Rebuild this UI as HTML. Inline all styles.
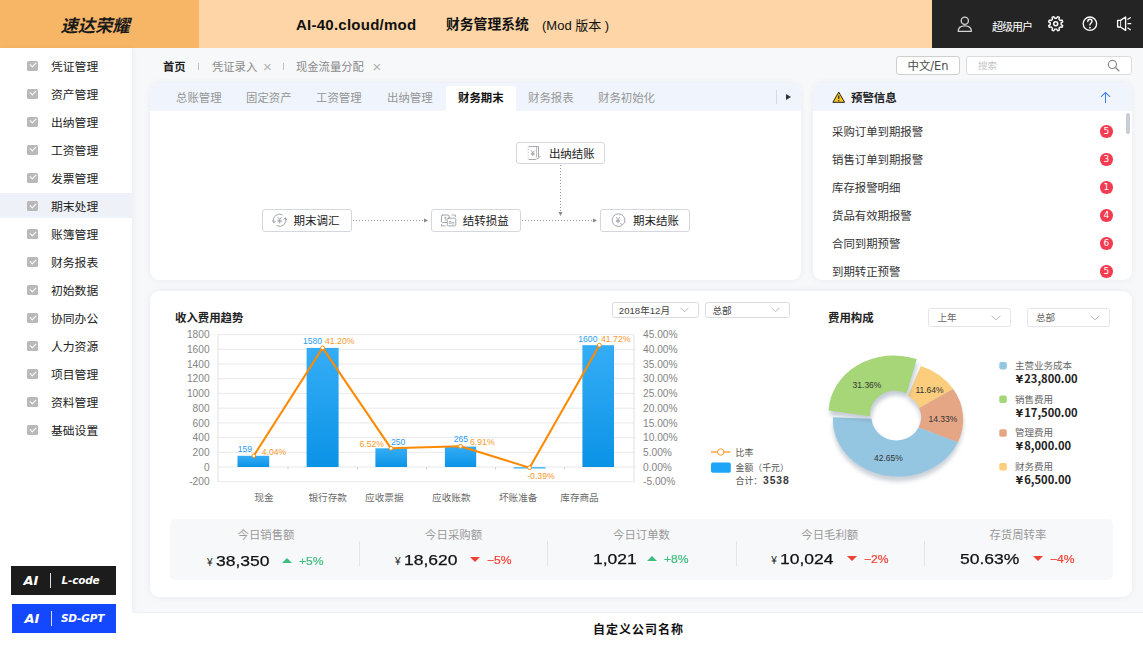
<!DOCTYPE html>
<html lang="zh-CN">
<head>
<meta charset="utf-8">
<title>财务管理系统</title>
<style>
*{box-sizing:border-box;margin:0;padding:0}
html,body{width:1143px;height:646px;overflow:hidden}
body{position:relative;background:#f7f8fa;font-family:"Liberation Sans","Noto Sans CJK SC",sans-serif;font-size:11.5px;color:#333}
.abs{position:absolute}
.t{position:absolute;white-space:nowrap;line-height:1}
/* header */
#hd{position:absolute;left:0;top:0;width:1143px;height:48px;background:#fdd5a6}
#hd .logo{position:absolute;left:0;top:0;width:199.400px;height:48px;background:#f7b566}
#hd .dark{position:absolute;left:932px;top:0;width:211px;height:48px;background:#242424}
/* sidebar */
#sb{position:absolute;left:0;top:48px;width:132px;height:598px;background:#fff;box-shadow:1px 0 5px rgba(80,90,120,.07)}
#sb .it{position:absolute;left:0;width:131px;height:28px}
#sb .it.on:before{content:"";position:absolute;left:0;top:1.500px;width:132px;height:25px;background:#eff1f8}
#sb .it span{position:absolute;left:51px;top:8px;font-size:11.8px;line-height:14px;color:#222;white-space:nowrap}
#sb .it i{position:absolute;left:27px;top:9.100px;width:11px;height:10px;background:#b9b9b9;border-radius:1.5px}
#sb .it i:after{content:"";position:absolute;left:2.5px;top:1.5px;width:5px;height:3px;border-left:1.3px solid #fff;border-bottom:1.3px solid #fff;transform:rotate(-45deg)}
.card{position:absolute;background:#fff;border-radius:9px;box-shadow:0 0 6px rgba(60,80,120,.08)}
.tab{top:10px;font-size:11.4px;color:#959595}
.fbox{position:absolute;width:89.600px;height:22.400px;border:1px solid #d5d7df;border-radius:3px;background:#fff}
.fbox span{position:absolute;left:30.200px;top:5px;font-size:11.5px;line-height:12px;color:#222;white-space:nowrap}
.bdg{position:absolute;left:287px;width:12.500px;height:12.500px;border-radius:50%;background:#f23c52;color:#fff;font-size:9px;font-weight:normal;line-height:12.500px;text-align:center;font-family:"DejaVu Sans","Liberation Sans",sans-serif}
.dd{position:absolute;border:1px solid #d9dce2;border-radius:2.5px;background:#fff}
.dd span{position:absolute;top:0;color:#444;white-space:nowrap}
.dd svg{position:absolute}
.sv{font-size:14.7px;color:#111;-webkit-text-stroke:0.25px #111;font-family:"Liberation Sans",sans-serif;transform:scaleX(1.19);transform-origin:0 50%}
.aib{position:absolute;width:104px;height:29px;color:#fff;font-style:italic;font-weight:bold;font-family:"DejaVu Sans","Liberation Sans",sans-serif}
.aib b{position:absolute;left:12.500px;top:7px;font-size:13px;line-height:15px}
.aib i{position:absolute;left:39px;top:6.500px;width:1px;height:15px;background:#ddd}
.aib span{position:absolute;top:8px;font-size:10.500px;line-height:13px;white-space:nowrap;letter-spacing:-0.2px}
</style>
</head>
<body>
<!-- HEADER -->
<div id="hd">
  <div class="logo"><div class="t" style="left:60.500px;top:17.500px;font-size:17.300px;font-weight:bold;font-style:italic;color:#1a1a1a;letter-spacing:0px">速达荣耀</div></div>
  <div class="t" style="left:296px;top:17px;font-size:15px;font-weight:bold;color:#111;letter-spacing:0.25px">AI-40.cloud/mod</div>
  <div class="t" style="left:446px;top:18px;font-size:13.8px;font-weight:bold;color:#111">财务管理系统</div>
  <div class="t" style="left:542px;top:19px;font-size:13px;color:#111">(Mod 版本 )</div>
  <div class="dark">
    <svg class="abs" style="left:0;top:0" width="211" height="48" viewBox="0 0 211 48" fill="none" stroke="#fff" stroke-width="1.3" stroke-linecap="round" stroke-linejoin="round">
      <g stroke="#d4d4d4"><circle cx="32.800" cy="20.800" r="3.600"/><path d="M26.200 31.300c0-3.500 2.700-5.500 6.600-5.500s6.600 2 6.600 5.500z"/></g>
      <path d="M124.60 18.27L125.57 16.64L127.37 17.39L126.90 19.23L128.17 20.50L130.01 20.03L130.76 21.83L129.13 22.80L129.13 24.60L130.76 25.57L130.01 27.37L128.17 26.90L126.90 28.17L127.37 30.01L125.57 30.76L124.60 29.13L122.80 29.13L121.83 30.76L120.03 30.01L120.50 28.17L119.23 26.90L117.39 27.37L116.64 25.57L118.27 24.60L118.27 22.80L116.64 21.83L117.39 20.03L119.23 20.50L120.50 19.23L120.03 17.39L121.83 16.64L122.80 18.27Z" stroke-width="1.35"/><circle cx="123.700" cy="23.700" r="2" stroke-width="1.500"/>
      <circle cx="157.900" cy="23.700" r="6.700" stroke-width="1.300"/><path d="M155.800 21.500c0-1.400 0.900-2.200 2.100-2.200s2.100 0.800 2.100 2c0 1.700-2.100 1.800-2.100 3.700" stroke-width="1.400"/><circle cx="157.900" cy="27.700" r="0.600" fill="#fff" stroke-width="0.600"/>
      <path d="M185.600 20.400h2.800l5.200-3.400v13.400l-5.200-3.400h-2.800z" stroke-width="1.300"/><path d="M188.600 20.600v5.800" stroke-width="0.900"/><path d="M195.800 19.300l2.600-1.600M196 23.700h2.800M195.800 28.100l2.600 1.600" stroke-width="1.200"/>
    </svg>
    <div class="t" style="left:60px;top:21.500px;font-size:11px;color:#fff;letter-spacing:-1px">超级用户</div>
  </div>
</div>
<!-- SIDEBAR -->
<div id="sb">
  <div class="it" style="top:3.70px"><i></i><span>凭证管理</span></div>
  <div class="it" style="top:31.75px"><i></i><span>资产管理</span></div>
  <div class="it" style="top:59.80px"><i></i><span>出纳管理</span></div>
  <div class="it" style="top:87.85px"><i></i><span>工资管理</span></div>
  <div class="it" style="top:115.90px"><i></i><span>发票管理</span></div>
  <div class="it on" style="top:143.95px"><i></i><span>期末处理</span></div>
  <div class="it" style="top:172.00px"><i></i><span>账簿管理</span></div>
  <div class="it" style="top:200.05px"><i></i><span>财务报表</span></div>
  <div class="it" style="top:228.10px"><i></i><span>初始数据</span></div>
  <div class="it" style="top:256.15px"><i></i><span>协同办公</span></div>
  <div class="it" style="top:284.20px"><i></i><span>人力资源</span></div>
  <div class="it" style="top:312.25px"><i></i><span>项目管理</span></div>
  <div class="it" style="top:340.30px"><i></i><span>资料管理</span></div>
  <div class="it" style="top:368.35px"><i></i><span>基础设置</span></div>
</div>
<!-- AI BUTTONS -->
<div class="aib" style="left:11px;top:566px;width:104.500px;background:#1c1c1c"><b>AI</b><i></i><span style="left:50.500px">L-code</span></div>
<div class="aib" style="left:12px;top:604.200px;background:#1448ff"><b>AI</b><i></i><span style="left:49px">SD-GPT</span></div>
<!-- BREADCRUMB -->
<div class="t" style="left:163px;top:61.500px;font-size:11.3px;font-weight:bold;color:#222">首页</div>
<div class="abs" style="left:198px;top:63px;width:1px;height:7px;background:#c2c2c2"></div>
<div class="t" style="left:212px;top:61.500px;font-size:11.3px;color:#8a8a8a">凭证录入</div>
<div class="t" style="left:263px;top:58.500px;font-size:15px;color:#b0b0b0;font-family:'Liberation Sans',sans-serif">×</div>
<div class="abs" style="left:283px;top:63px;width:1px;height:7px;background:#c2c2c2"></div>
<div class="t" style="left:296px;top:61.500px;font-size:11.3px;color:#8a8a8a">现金流量分配</div>
<div class="t" style="left:372.500px;top:58.500px;font-size:15px;color:#b0b0b0;font-family:'Liberation Sans',sans-serif">×</div>
<!-- LANG + SEARCH -->
<div class="abs" style="left:896px;top:56px;width:64px;height:19px;border:1px solid #cfcfcf;border-radius:3px;background:#fff"></div>
<div class="t" style="left:907.500px;top:60.500px;font-size:11.400px;color:#4a4a4a;font-family:'DejaVu Sans','Noto Sans CJK SC',sans-serif">中文/En</div>
<div class="abs" style="left:966px;top:56px;width:166px;height:19px;border:1px solid #dcdcdc;border-radius:3px;background:#fff"></div>
<div class="t" style="left:978px;top:61px;font-size:9.5px;color:#c4c4c4">搜索</div>
<svg class="abs" style="left:1105.500px;top:58px" width="15" height="15" viewBox="0 0 14 14"><circle cx="6" cy="6" r="3.8" fill="none" stroke="#8a8a8a" stroke-width="1.1"/><path d="M8.8 8.8L12 12" stroke="#8a8a8a" stroke-width="1.3" stroke-linecap="round"/></svg>
<!-- CARDS -->
<div class="card" id="c1" style="left:150px;top:83px;width:651px;height:196.600px">
  <div class="abs" style="left:0;top:0;width:651px;height:28px;background:#f0f5fd;border-radius:9px 9px 0 0"></div>
  <div class="abs" style="left:296px;top:3px;width:70px;height:25px;background:#fff;border-radius:4px 4px 0 0"></div>
  <div class="t tab" style="left:26px">总账管理</div>
  <div class="t tab" style="left:96px">固定资产</div>
  <div class="t tab" style="left:166px">工资管理</div>
  <div class="t tab" style="left:237px">出纳管理</div>
  <div class="t tab" style="left:308px;color:#111;font-weight:bold">财务期末</div>
  <div class="t tab" style="left:378px">财务报表</div>
  <div class="t tab" style="left:448px">财务初始化</div>
  <div class="abs" style="left:626px;top:7px;width:1px;height:14px;background:#d5d9e0"></div>
  <div class="abs" style="left:635.500px;top:11px;width:0;height:0;border-left:5.500px solid #333;border-top:3px solid transparent;border-bottom:3px solid transparent"></div>
  <!-- flow -->
  <div class="fbox" style="left:112.400px;top:126.400px"><span>期末调汇</span></div>
  <div class="fbox" style="left:281.300px;top:126.400px"><span style="left:30.500px">结转损益</span></div>
  <div class="fbox" style="left:450.200px;top:126.400px"><span style="left:31.800px">期末结账</span></div>
  <div class="fbox" style="left:365.700px;top:58.700px"><span style="left:32.200px">出纳结账</span></div>
  <svg class="abs" style="left:0;top:0" width="651" height="196" viewBox="0 0 651 196">
    <g stroke="#999" stroke-width="1" stroke-dasharray="1 2" fill="none">
      <path d="M203 137.500H274"/><path d="M372 137.500H443"/><path d="M410.500 82V129"/>
    </g>
    <g fill="#888"><path d="M274 135.500l4 2-4 2z"/><path d="M443 135.500l4 2-4 2z"/><path d="M408.500 129l2 4 2-4z"/></g>
    <g fill="none" stroke="#9a9ca3" stroke-width="0.9" stroke-linecap="round" stroke-linejoin="round">
      <!-- icon1: circular arrows + yen -->
      <path d="M123.700 139.500a6.200 6.200 0 0 1 8.500-7.800"/><path d="M135.500 135a6.200 6.200 0 0 1-8.600 7.700"/>
      <path d="M122.600 137.700l1.100 1.900 1.800-1.200M136.700 136.800l-1.200-1.900-1.800 1.200"/>
      <path d="M127.900 134.300l1.700 2.300 1.700-2.300M129.600 136.600v3.400M127.900 137.300h3.400M127.900 138.700h3.400" stroke-width="0.8"/>
      <!-- icon4: circle + yen + check -->
      <path d="M471.500 142.900a6.400 6.400 0 1 1 3.300-4.200"/>
      <path d="M470.500 140.300l1.700 1.700 3-3"/>
      <path d="M466.300 134.300l1.700 2.300 1.700-2.300M468 136.600v3.400M466.300 137.300h3.400M466.300 138.700h3.400" stroke-width="0.8"/>
      <!-- icon2: two docs -->
      <rect x="291.500" y="132" width="7.700" height="7.500" rx="1.200"/><rect x="297.200" y="135.200" width="8.600" height="7.700" rx="1.200" fill="#fff"/>
      <path d="M295.300 134v3.400M294.600 135h1.400M299.700 138.500h1.500v2h-1.500zM302.500 139.500h1.500M302.500 141h1.500" stroke-width="0.7"/>
      <path d="M302 132h3.500v1.800M291.500 141.300v1.600h3.800" stroke-width="0.8"/>
      <!-- icon3: book + yen + check -->
      <path d="M379 63.600h9.500v10.500M386 76.500h-7M378.400 64.200v11.600" stroke-dasharray="none"/>
      <path d="M378.400 64.500v11.500" stroke="#fff" stroke-width="1.200" stroke-dasharray="1.200 1.600"/>
      <path d="M386.600 63.800v9.800" stroke-width="0.7"/>
      <path d="M386.300 74.600l1.300 1.300 2.600-2.600"/>
      <path d="M381.300 67.600l1.500 2 1.500-2M382.800 69.600v3M381.300 70.200h3M381.300 71.400h3" stroke-width="0.8"/>
    </g>
  </svg>
</div>
<div class="card" id="c2" style="left:813px;top:83px;width:319px;height:196.600px;overflow:hidden">
  <div class="abs" style="left:0;top:0;width:319px;height:28px;background:#f0f5fd"></div>
  <svg class="abs" style="left:19px;top:8px" width="13.500" height="12.600" viewBox="0 0 15 14"><path d="M7.5 1.2L14 12.6H1z" fill="#f8c51c" stroke="#222" stroke-width="1.1" stroke-linejoin="round"/><path d="M7.5 5v4" stroke="#222" stroke-width="1.3"/><circle cx="7.5" cy="10.700" r="0.800" fill="#222"/></svg>
  <div class="t" style="left:38px;top:10px;font-size:11.4px;font-weight:bold;color:#222">预警信息</div>
  <svg class="abs" style="left:285.500px;top:7.500px" width="13" height="13" viewBox="0 0 12 12"><path d="M6 11V1.500M1.800 5.500L6 1.300l4.200 4.200" fill="none" stroke="#3b7cf5" stroke-width="0.95"/></svg>
  <div class="abs" style="left:313px;top:30px;width:4px;height:21px;background:#c9cdd6;border-radius:2px"></div>
  <div class="t" style="left:19px;top:44.1px;font-size:11.4px;color:#333">采购订单到期报警</div>
  <div class="bdg" style="top:42.1px">5</div>
  <div class="t" style="left:19px;top:72.1px;font-size:11.4px;color:#333">销售订单到期报警</div>
  <div class="bdg" style="top:70.1px">3</div>
  <div class="t" style="left:19px;top:100.1px;font-size:11.4px;color:#333">库存报警明细</div>
  <div class="bdg" style="top:98.1px">1</div>
  <div class="t" style="left:19px;top:128.1px;font-size:11.4px;color:#333">货品有效期报警</div>
  <div class="bdg" style="top:126.1px">4</div>
  <div class="t" style="left:19px;top:156.1px;font-size:11.4px;color:#333">合同到期预警</div>
  <div class="bdg" style="top:154.1px">6</div>
  <div class="t" style="left:19px;top:184.1px;font-size:11.4px;color:#333">到期转正预警</div>
  <div class="bdg" style="top:182.1px">5</div>
</div>
<div class="abs" id="c3" style="left:150px;top:290px;width:982px;height:307px"><div class="card" style="left:0;top:0.700px;width:982px;height:306.300px"></div>
<div class="t" style="left:25px;top:23px;font-size:11.4px;font-weight:bold;color:#222">收入费用趋势</div>
<div class="t" style="left:678px;top:23px;font-size:11.4px;font-weight:bold;color:#222">费用构成</div>
<div class="dd" style="left:462px;top:12.4px;width:86.5px;height:15.4px;border-color:#d9dce4"><span style="left:5.8px;top:0.6px;font-size:9.6px;line-height:13.4px;color:#444">2018年12月</span><svg width="9" height="6" viewBox="0 0 9 6" style="right:8.5px;top:4.0px"><path d="M0.500 0.800L4.5 4.800L8.5 0.800" fill="none" stroke="#b0b0b0" stroke-width="0.9"/></svg></div>
<div class="dd" style="left:555px;top:12.4px;width:84.5px;height:15.4px;border-color:#d9dce4"><span style="left:6.5px;top:0.6px;font-size:9.6px;line-height:13.4px;color:#444">总部</span><svg width="9" height="6" viewBox="0 0 9 6" style="right:8.5px;top:4.0px"><path d="M0.500 0.800L4.5 4.800L8.5 0.800" fill="none" stroke="#b0b0b0" stroke-width="0.9"/></svg></div>
<div class="dd" style="left:778px;top:17.6px;width:82.6px;height:19.4px;border-color:#e3e5ea"><span style="left:8.5px;top:0.3px;font-size:9.6px;line-height:17.4px;color:#666">上年</span><svg width="10" height="6" viewBox="0 0 10 6" style="right:8.5px;top:5.999999999999999px"><path d="M0.500 0.800L5.0 4.800L9.5 0.800" fill="none" stroke="#b0b0b0" stroke-width="0.9"/></svg></div>
<div class="dd" style="left:877px;top:17.6px;width:82.6px;height:19.4px;border-color:#e3e5ea"><span style="left:8px;top:0.3px;font-size:9.6px;line-height:17.4px;color:#666">总部</span><svg width="10" height="6" viewBox="0 0 10 6" style="right:8.5px;top:5.999999999999999px"><path d="M0.500 0.800L5.0 4.800L9.5 0.800" fill="none" stroke="#b0b0b0" stroke-width="0.9"/></svg></div>
<svg class="abs" style="left:0;top:0" width="982" height="307" viewBox="0 0 982 307" font-family="Liberation Sans, Noto Sans CJK SC, sans-serif">
<defs><linearGradient id="bg" x1="0" y1="0" x2="0" y2="1"><stop offset="0" stop-color="#35adf6"/><stop offset="1" stop-color="#0b93e6"/></linearGradient><filter id="sh" x="-20%" y="-20%" width="140%" height="150%"><feGaussianBlur stdDeviation="2.2"/></filter></defs>
<path d="M68 44.6H484" stroke="#e9e9eb" stroke-width="1"/>
<path d="M68 59.3H484" stroke="#e9e9eb" stroke-width="1"/>
<path d="M68 74.0H484" stroke="#e9e9eb" stroke-width="1"/>
<path d="M68 88.7H484" stroke="#e9e9eb" stroke-width="1"/>
<path d="M68 103.4H484" stroke="#e9e9eb" stroke-width="1"/>
<path d="M68 118.2H484" stroke="#e9e9eb" stroke-width="1"/>
<path d="M68 132.9H484" stroke="#e9e9eb" stroke-width="1"/>
<path d="M68 147.6H484" stroke="#e9e9eb" stroke-width="1"/>
<path d="M68 162.3H484" stroke="#e9e9eb" stroke-width="1"/>
<path d="M68 177.0H484" stroke="#e9e9eb" stroke-width="1"/>
<path d="M68 191.7H484" stroke="#e9e9eb" stroke-width="1"/>
<path d="M68 44.6V191.7M484 44.6V191.7" stroke="#dcdfe4" stroke-width="1"/>
<path d="M138 177.0v2.5" stroke="#d0d3d8" stroke-width="1"/>
<path d="M207.5 177.0v2.5" stroke="#d0d3d8" stroke-width="1"/>
<path d="M276.5 177.0v2.5" stroke="#d0d3d8" stroke-width="1"/>
<path d="M345.5 177.0v2.5" stroke="#d0d3d8" stroke-width="1"/>
<path d="M414.5 177.0v2.5" stroke="#d0d3d8" stroke-width="1"/>
<text x="59.6" y="48.2" font-size="10.2" fill="#858585" text-anchor="end">1800</text>
<text x="493" y="48.2" font-size="10.2" fill="#858585">45.00%</text>
<text x="59.6" y="62.9" font-size="10.2" fill="#858585" text-anchor="end">1600</text>
<text x="493" y="62.9" font-size="10.2" fill="#858585">40.00%</text>
<text x="59.6" y="77.6" font-size="10.2" fill="#858585" text-anchor="end">1400</text>
<text x="493" y="77.6" font-size="10.2" fill="#858585">35.00%</text>
<text x="59.6" y="92.3" font-size="10.2" fill="#858585" text-anchor="end">1200</text>
<text x="493" y="92.3" font-size="10.2" fill="#858585">30.00%</text>
<text x="59.6" y="107.0" font-size="10.2" fill="#858585" text-anchor="end">1000</text>
<text x="493" y="107.0" font-size="10.2" fill="#858585">25.00%</text>
<text x="59.6" y="121.8" font-size="10.2" fill="#858585" text-anchor="end">800</text>
<text x="493" y="121.8" font-size="10.2" fill="#858585">20.00%</text>
<text x="59.6" y="136.5" font-size="10.2" fill="#858585" text-anchor="end">600</text>
<text x="493" y="136.5" font-size="10.2" fill="#858585">15.00%</text>
<text x="59.6" y="151.2" font-size="10.2" fill="#858585" text-anchor="end">400</text>
<text x="493" y="151.2" font-size="10.2" fill="#858585">10.00%</text>
<text x="59.6" y="165.9" font-size="10.2" fill="#858585" text-anchor="end">200</text>
<text x="493" y="165.9" font-size="10.2" fill="#858585">5.00%</text>
<text x="59.6" y="180.6" font-size="10.2" fill="#858585" text-anchor="end">0</text>
<text x="493" y="180.6" font-size="10.2" fill="#858585">0.00%</text>
<text x="59.6" y="195.3" font-size="10.2" fill="#858585" text-anchor="end">-200</text>
<text x="493" y="195.3" font-size="10.2" fill="#858585">-5.00%</text>
<rect x="87.5" y="165.8" width="31.7" height="11.2" fill="url(#bg)"/>
<rect x="156.6" y="57.9" width="32.0" height="119.1" fill="url(#bg)"/>
<rect x="225.4" y="158.3" width="31.6" height="18.7" fill="url(#bg)"/>
<rect x="294.9" y="156.6" width="31.3" height="20.4" fill="url(#bg)"/>
<rect x="363.6" y="177.0" width="32.0" height="1.6" fill="#5bbcf5"/>
<rect x="432.4" y="55.2" width="31.6" height="121.8" fill="url(#bg)"/>
<polyline points="103.8,165.8 172.6,57.9 241,158.3 310.5,156.3 379.6,177.7 449.4,55.2" fill="none" stroke="#fb8b05" stroke-width="2.1" stroke-linejoin="round"/>
<circle cx="103.8" cy="165.8" r="1.9" fill="#fff" stroke="#fb8b05" stroke-width="1"/>
<circle cx="172.6" cy="57.9" r="1.9" fill="#fff" stroke="#fb8b05" stroke-width="1"/>
<circle cx="241" cy="158.3" r="1.9" fill="#fff" stroke="#fb8b05" stroke-width="1"/>
<circle cx="310.5" cy="156.3" r="1.9" fill="#fff" stroke="#fb8b05" stroke-width="1"/>
<circle cx="379.6" cy="177.7" r="1.9" fill="#fff" stroke="#fb8b05" stroke-width="1"/>
<circle cx="449.4" cy="55.2" r="1.9" fill="#fff" stroke="#fb8b05" stroke-width="1"/>
<text x="87.8" y="161.7" font-size="8.6" fill="#2a9df0">159</text>
<text x="111.7" y="165.4" font-size="8.7" fill="#f79a2a">4.04%</text>
<text x="153" y="54.0" font-size="8.6" fill="#2a9df0">1580</text>
<text x="175" y="54.0" font-size="8.7" fill="#f79a2a">41.20%</text>
<text x="209.4" y="156.9" font-size="8.7" fill="#f79a2a">6.52%</text>
<text x="241" y="154.5" font-size="8.6" fill="#2a9df0">250</text>
<text x="303.7" y="151.5" font-size="8.6" fill="#2a9df0">265</text>
<text x="320" y="155.2" font-size="8.7" fill="#f79a2a">6.91%</text>
<text x="377.2" y="188.6" font-size="8.7" fill="#f79a2a">-0.39%</text>
<text x="428.3" y="52.4" font-size="8.6" fill="#2a9df0">1600</text>
<text x="451" y="52.4" font-size="8.7" fill="#f79a2a">41.72%</text>
<text x="114" y="210.5" font-size="9.6" fill="#6a6a6a" text-anchor="middle">现金</text>
<text x="177.7" y="210.5" font-size="9.6" fill="#6a6a6a" text-anchor="middle">银行存款</text>
<text x="234.3" y="210.5" font-size="9.6" fill="#6a6a6a" text-anchor="middle">应收票据</text>
<text x="301.3" y="210.5" font-size="9.6" fill="#6a6a6a" text-anchor="middle">应收账款</text>
<text x="368.2" y="210.5" font-size="9.6" fill="#6a6a6a" text-anchor="middle">坏账准备</text>
<text x="429.5" y="210.5" font-size="9.6" fill="#6a6a6a" text-anchor="middle">库存商品</text>
<path d="M561 162H580.5" stroke="#f79a2a" stroke-width="1.3"/><circle cx="570.7" cy="162" r="3.2" fill="#fff" stroke="#f79a2a" stroke-width="1"/>
<text x="585.6" y="165.7" font-size="8.9" fill="#555">比率</text>
<rect x="561" y="172.6" width="19.8" height="10.2" rx="1.8" fill="#1da5f8"/>
<text x="585.6" y="181.1" font-size="8.9" fill="#555">金额（千元）</text>
<text x="585.6" y="194.4" font-size="8.9" fill="#555">合计：<tspan dx="0.8" font-size="10.3" font-weight="bold" fill="#3a3a3a" letter-spacing="0.9">3538</tspan></text>
<g filter="url(#sh)" opacity="0.38"><path d="M770.9 80.5A65.2 57.2 0 1 1 682.9 131.8L721.6 133.2A24.8 23.5 0 1 0 758.0 110.6Z" fill="#75869a"/></g>
<path d="M770.9 76.0A65.2 57.2 0 0 1 803.2 99.1L769.2 117.9A24.8 23.5 0 0 0 758.0 106.1Z" fill="#fccd7c"/>
<path d="M803.2 99.1A65.2 57.2 0 0 1 807.8 152.3L768.5 137.4A24.8 23.5 0 0 0 769.2 117.9Z" fill="#e5a686"/>
<path d="M807.8 152.3A65.2 57.2 0 0 1 682.9 127.3L721.6 128.7A24.8 23.5 0 0 0 768.5 137.4Z" fill="#94c6e1"/>
<g filter="url(#sh)" opacity="0.42"><path d="M679.7 124.9A65.2 57.2 0 0 1 767.7 73.6L758.0 108.1A24.8 23.5 0 0 0 721.6 130.7Z" fill="#75869a"/></g>
<path d="M678.7 120.4A65.2 57.2 0 0 1 766.7 69.1L756.5 103.6A24.8 23.5 0 0 0 720.1 126.2Z" fill="#a6d678"/>
<text x="717" y="97.6" font-size="8.5" fill="#333" text-anchor="middle">31.36%</text>
<text x="779.5" y="103.3" font-size="8.5" fill="#333" text-anchor="middle">11.64%</text>
<text x="792.9" y="132.3" font-size="8.5" fill="#333" text-anchor="middle">14.33%</text>
<text x="738.4" y="171.2" font-size="8.5" fill="#333" text-anchor="middle">42.65%</text>
<rect x="849.3" y="71.9" width="7.5" height="7.5" rx="1.8" fill="#93c6e1"/>
<text x="865" y="79.0" font-size="9.5" fill="#666">主营业务成本</text>
<text x="865.7" y="92.8" font-size="11.2" font-weight="bold" fill="#222" font-family="Noto Sans CJK SC, sans-serif"><tspan font-family="DejaVu Sans, sans-serif" font-size="10.4">¥</tspan><tspan dx="1.3">23,800.00</tspan></text>
<rect x="849.3" y="105.6" width="7.5" height="7.5" rx="1.8" fill="#a6d678"/>
<text x="865" y="112.7" font-size="9.5" fill="#666">销售费用</text>
<text x="865.7" y="126.5" font-size="11.2" font-weight="bold" fill="#222" font-family="Noto Sans CJK SC, sans-serif"><tspan font-family="DejaVu Sans, sans-serif" font-size="10.4">¥</tspan><tspan dx="1.3">17,500.00</tspan></text>
<rect x="849.3" y="139.3" width="7.5" height="7.5" rx="1.8" fill="#e6a686"/>
<text x="865" y="146.4" font-size="9.5" fill="#666">管理费用</text>
<text x="865.7" y="160.2" font-size="11.2" font-weight="bold" fill="#222" font-family="Noto Sans CJK SC, sans-serif"><tspan font-family="DejaVu Sans, sans-serif" font-size="10.4">¥</tspan><tspan dx="1.3">8,000.00</tspan></text>
<rect x="849.3" y="173.0" width="7.5" height="7.5" rx="1.8" fill="#fdcd7b"/>
<text x="865" y="180.1" font-size="9.5" fill="#666">财务费用</text>
<text x="865.7" y="193.9" font-size="11.2" font-weight="bold" fill="#222" font-family="Noto Sans CJK SC, sans-serif"><tspan font-family="DejaVu Sans, sans-serif" font-size="10.4">¥</tspan><tspan dx="1.3">6,500.00</tspan></text>
</svg>
<div class="abs" style="left:20px;top:228.5px;width:943px;height:61.5px;background:#f7f8fa;border-radius:5px"></div>
<div class="abs" style="left:208.6px;top:250.7px;width:1px;height:25px;background:#e3e5e9"></div>
<div class="abs" style="left:397.2px;top:250.7px;width:1px;height:25px;background:#e3e5e9"></div>
<div class="abs" style="left:585.8px;top:250.7px;width:1px;height:25px;background:#e3e5e9"></div>
<div class="abs" style="left:774.4px;top:250.7px;width:1px;height:25px;background:#e3e5e9"></div>
<div class="t" style="left:87.5px;top:240.0px;font-size:11.4px;color:#999">今日销售额</div>
<div class="t" style="left:56.9px;top:268.2px;font-size:10px;color:#222;font-family:'Liberation Sans',sans-serif">¥</div>
<div class="t sv" style="left:65.5px;top:264.0px">38,350</div>
<div class="abs" style="left:132.3px;top:267.9px;width:0;height:0;border-left:5px solid transparent;border-right:5px solid transparent;border-bottom:5px solid #3dbd7d"></div>
<div class="t" style="left:148.7px;top:266.1px;font-size:10.8px;color:#3dbd7d;font-family:'Liberation Sans',sans-serif;transform:scaleX(1.12);transform-origin:0 50%;-webkit-text-stroke:0.2px #3dbd7d">+5%</div>
<div class="t" style="left:275.1px;top:240.0px;font-size:11.4px;color:#999">今日采购额</div>
<div class="t" style="left:245px;top:267.0px;font-size:10px;color:#222;font-family:'Liberation Sans',sans-serif">¥</div>
<div class="t sv" style="left:254.0px;top:262.8px">18,620</div>
<div class="abs" style="left:319.6px;top:266.7px;width:0;height:0;border-left:5px solid transparent;border-right:5px solid transparent;border-top:5px solid #f04134"></div>
<div class="t" style="left:336.8px;top:264.9px;font-size:10.8px;color:#f04134;font-family:'Liberation Sans',sans-serif;transform:scaleX(1.12);transform-origin:0 50%;-webkit-text-stroke:0.2px #f04134">−5%</div>
<div class="t" style="left:463.0px;top:240.0px;font-size:11.4px;color:#999">今日订单数</div>
<div class="t sv" style="left:443.0px;top:262.1px">1,021</div>
<div class="abs" style="left:496.5px;top:266.0px;width:0;height:0;border-left:5px solid transparent;border-right:5px solid transparent;border-bottom:5px solid #3dbd7d"></div>
<div class="t" style="left:513.6px;top:264.2px;font-size:10.8px;color:#3dbd7d;font-family:'Liberation Sans',sans-serif;transform:scaleX(1.12);transform-origin:0 50%;-webkit-text-stroke:0.2px #3dbd7d">+8%</div>
<div class="t" style="left:651.3px;top:240.0px;font-size:11.4px;color:#999">今日毛利额</div>
<div class="t" style="left:621.2px;top:266.2px;font-size:10px;color:#222;font-family:'Liberation Sans',sans-serif">¥</div>
<div class="t sv" style="left:629.8px;top:262.0px">10,024</div>
<div class="abs" style="left:696.6px;top:265.9px;width:0;height:0;border-left:5px solid transparent;border-right:5px solid transparent;border-top:5px solid #f04134"></div>
<div class="t" style="left:713.9px;top:264.1px;font-size:10.8px;color:#f04134;font-family:'Liberation Sans',sans-serif;transform:scaleX(1.12);transform-origin:0 50%;-webkit-text-stroke:0.2px #f04134">−2%</div>
<div class="t" style="left:839.4px;top:240.0px;font-size:11.4px;color:#999">存货周转率</div>
<div class="t sv" style="left:810.0px;top:262.0px">50.63%</div>
<div class="abs" style="left:882.6px;top:265.9px;width:0;height:0;border-left:5px solid transparent;border-right:5px solid transparent;border-top:5px solid #f04134"></div>
<div class="t" style="left:899.8px;top:264.1px;font-size:10.8px;color:#f04134;font-family:'Liberation Sans',sans-serif;transform:scaleX(1.12);transform-origin:0 50%;-webkit-text-stroke:0.2px #f04134">−4%</div>
</div>
<!-- FOOTER -->
<div class="abs" style="left:132px;top:612px;width:1011px;height:34px;background:#fff;border-top:1px solid #f0f1f4"></div>
<div class="t" style="left:593px;top:624px;font-size:12px;font-weight:bold;color:#111;letter-spacing:1px">自定义公司名称</div>
</body>
</html>
